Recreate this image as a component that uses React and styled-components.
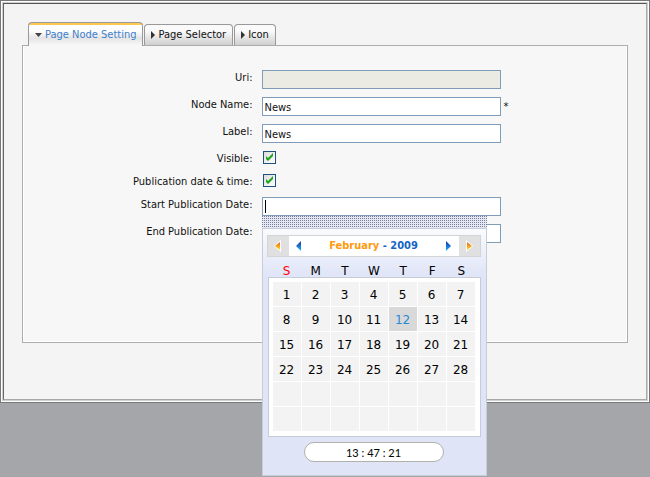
import React, { useState } from "react";
import styled, { createGlobalStyle, css } from "styled-components";

const Global = createGlobalStyle`
  *, *::before, *::after { box-sizing: border-box; }
  body {
    margin: 0;
    background: #a5a6aa;
    color: #111;
    font: 11px/16px "DejaVu Sans Condensed", Tahoma, sans-serif;
  }
  button, input { font: inherit; color: inherit; margin: 0; }
`;

const Page = styled.div`
  min-height: 100vh;
  background: #a5a6aa;
`;

const Frame = styled.main`
  border: 1px solid #77787a;
  background: #fff;
  padding: 1px;
`;

const Bevel = styled.div`
  border: 1px solid #d0d0d0;
`;

const Surface = styled.div`
  border: 1px solid #a8a8a8;
  border-top-color: #555;
  border-left-color: #666;
  background: #f4f4f4;
  padding: 18px 18px 56px;
`;

const TabList = styled.div`
  display: flex;
  align-items: flex-end;
  gap: 1px;
  padding-left: 6px;
`;

const Tab = styled.button`
  display: flex;
  align-items: center;
  gap: 3px;
  height: 21px;
  padding: 0 6px;
  border: 1px solid #999;
  border-bottom: 0;
  border-radius: 4px 4px 0 0;
  background: linear-gradient(#fafafa 30%, #cfcfcf);
  white-space: nowrap;
  ${(p) =>
    p.$active &&
    css`
      position: relative;
      height: 24px;
      margin-bottom: -1px;
      color: #3d80cc;
      background: linear-gradient(#ffc850 2px, #fff 2px, #fff 8px, #e4e4e4 15px, #f7f7f7 22px);
    `}
`;

const Panel = styled.section`
  border: 1px solid #adadad;
  background: #f7f7f7;
  box-shadow: inset -1px -1px #fff, inset 1px 0 #fff;
  padding: 24px 0 99px;
`;

const Form = styled.form`
  display: grid;
  gap: 8px;
`;

const Row = styled.div`
  display: grid;
  grid-template-columns: 38% 1fr;
  column-gap: 9px;
  height: ${(p) => (p.$short ? 15 : 19)}px;
`;

const Label = styled.label`
  text-align: right;
`;

const Control = styled.div`
  position: relative;
  display: flex;
  align-items: flex-start;
  gap: 3px;
`;

const TextBox = styled.input`
  width: 239px;
  height: 19px;
  padding: 1px 2px 0;
  border: 1px solid #7f9db9;
  border-radius: 0;
  background: #fff;
  outline: 0;
  &:disabled { background: #ebebe4; }
  &:focus:placeholder-shown {
    caret-color: transparent;
    background: linear-gradient(#000, #000) 2px 2px / 1px 13px no-repeat #fff;
  }
`;

const Required = styled.span`
  line-height: 20px;
`;

const TickWrap = styled.span`
  display: grid;
  margin-left: 1px;
  > * { grid-area: 1 / 1; }
`;

const TickBox = styled.input`
  appearance: none;
  width: 13px;
  height: 13px;
  border: 1px solid #1c5180;
  background: linear-gradient(135deg, #dcdcd7, #fff);
  & + svg { visibility: hidden; }
  &:checked + svg { visibility: visible; }
`;

const TickMark = styled.svg`
  width: 13px;
  height: 13px;
  pointer-events: none;
  z-index: 1;
`;

const Popup = styled.div`
  position: absolute;
  top: 100%;
  left: 0;
  z-index: 2;
  width: 225px;
  font: 12px/14px "DejaVu Sans", Verdana, sans-serif;
  color: #000;
`;

const Grip = styled.div`
  height: 12px;
  background: conic-gradient(#e4e7f6 75%, #7c7f92 0) 0 0 / 2px 2px;
`;

const CalendarBody = styled.div`
  padding: 6px 5px 13px 4px;
  border: 1px solid #c8ccd6;
  background: linear-gradient(#fafbfe, #dfe4f7 48px);
`;

const CalendarHead = styled.div`
  display: flex;
  height: 22px;
  border: 1px solid #d4d4d4;
  background: #fff;
`;

const Step = styled.button`
  display: grid;
  place-items: center;
  width: ${(p) => (p.$outer ? 21 : 19)}px;
  padding: 0;
  border: 0;
  background: ${(p) => (p.$outer ? "#e1e0e0" : "#fff")};
`;

const Title = styled.div`
  flex: 1;
  text-align: center;
  font: bold 11px/20px "DejaVu Sans Condensed", Tahoma, sans-serif;
  white-space: nowrap;
  color: #1264c4;
`;

const Month = styled.span`
  color: #ff9a0c;
`;

const Days = styled.table`
  display: block;
  margin-left: 1px;
  text-align: center;
`;

const Weekdays = styled.thead`
  display: block;
  height: 20px;
  padding: 7px 5px 0;
`;

const Weeks = styled.tbody`
  display: grid;
  gap: 1px;
  padding: 4px 5px 5px 4px;
  border: 1px solid #c8ccd6;
  background: #fff;
`;

const Week = styled.tr`
  display: grid;
  grid-template-columns: repeat(7, 1fr);
  column-gap: 1px;
`;

const Weekday = styled.th`
  padding: 0;
  font-weight: normal;
  color: ${(p) => (p.$sunday ? "#f00" : "#000")};
`;

const DayCell = styled.td`
  display: grid;
  height: 24px;
  padding: 0;
  background: ${(p) => (p.$today ? "#d9d9d9" : "#f3f3f3")};
  color: ${(p) => (p.$today ? "#2788d8" : "#000")};
`;

const Day = styled.button`
  padding: 2px 0 0;
  border: 0;
  background: none;
`;

const Clock = styled.input`
  display: block;
  width: 140px;
  height: 20px;
  margin: 5px auto 0;
  padding: 0;
  border: 1px solid #b0b0ac;
  border-radius: 10px;
  background: #fff;
  text-align: center;
  font: 11px/18px "Lato", Tahoma, sans-serif;
`;

const tabs = ["Page Node Setting", "Page Selector", "Icon"];

function TabArrow({ open }) {
  return open ? (
    <svg width="7" height="5" viewBox="0 0 7 5" aria-hidden="true">
      <path d="M0 1h7L3.500 5z" fill="#444" />
    </svg>
  ) : (
    <svg width="4" height="8" viewBox="0 0 4 8" aria-hidden="true">
      <path d="M0 0v8l4-4z" fill="#333" />
    </svg>
  );
}

function StepArrow({ back, outer }) {
  const id = `arrow-${outer ? "year" : "month"}-${back ? "back" : "next"}`;
  return (
    <svg width="8" height="12" viewBox="0 0 8 12" aria-hidden="true">
      <defs>
        <linearGradient id={id} x1="0" y1="0" x2="0" y2="1">
          <stop offset="0.2" stopColor={outer ? "#f07818" : "#1648b8"} />
          <stop offset="1" stopColor={outer ? "#ffe020" : "#20b8ff"} />
        </linearGradient>
      </defs>
      {outer && <path d={back ? "M7 0v12L0 6z" : "M1 0v12l7-6z"} fill="#fff" />}
      <path
        d={
          outer
            ? back ? "M6 2v8L1 6z" : "M2 2v8l5-4z"
            : back ? "M7 1v10L2 6z" : "M1 1v10l5-5z"
        }
        fill={`url(#${id})`}
      />
    </svg>
  );
}

function Field({ id, label, children, short }) {
  return (
    <Row $short={short}>
      <Label htmlFor={id}>{label}</Label>
      <Control>{children}</Control>
    </Row>
  );
}

function Tick({ id }) {
  return (
    <TickWrap>
      <TickBox id={id} type="checkbox" defaultChecked />
      <TickMark viewBox="0 0 13 13" aria-hidden="true">
        <path d="M3 5v3l2 2 5-5V2L5 7z" fill="#21a121" />
      </TickMark>
    </TickWrap>
  );
}

function Calendar() {
  return (
    <Popup role="dialog" aria-label="Calendar">
      <Grip />
      <CalendarBody>
        <CalendarHead>
          <Step type="button" $outer aria-label="Previous year"><StepArrow back outer /></Step>
          <Step type="button" aria-label="Previous month"><StepArrow back /></Step>
          <Title><Month>February</Month> - 2009</Title>
          <Step type="button" aria-label="Next month"><StepArrow /></Step>
          <Step type="button" $outer aria-label="Next year"><StepArrow outer /></Step>
        </CalendarHead>
        <Days>
          <Weekdays>
            <Week>
              {["S", "M", "T", "W", "T", "F", "S"].map((name, i) => (
                <Weekday key={i} $sunday={i === 0}>{name}</Weekday>
              ))}
            </Week>
          </Weekdays>
          <Weeks>
            {[0, 1, 2, 3, 4, 5].map((week) => (
              <Week key={week}>
                {[1, 2, 3, 4, 5, 6, 7].map((weekday) => {
                  const date = week * 7 + weekday;
                  return (
                    <DayCell key={date} $today={date === 12}>
                      {date <= 28 && <Day type="button">{date}</Day>}
                    </DayCell>
                  );
                })}
              </Week>
            ))}
          </Weeks>
        </Days>
        <Clock aria-label="Time" defaultValue="13 : 47 : 21" />
      </CalendarBody>
    </Popup>
  );
}

export default function App() {
  const [active, setActive] = useState(0);
  return (
    <Page>
      <Global />
      <Frame>
        <Bevel>
          <Surface>
            <TabList role="tablist">
              {tabs.map((name, i) => (
                <Tab
                  key={name}
                  type="button"
                  role="tab"
                  aria-selected={i === active}
                  $active={i === active}
                  onClick={() => setActive(i)}
                >
                  <TabArrow open={i === active} />
                  {name}
                </Tab>
              ))}
            </TabList>
            <Panel role="tabpanel">
              <Form>
                <Field id="uri" label="Uri:"><TextBox id="uri" disabled /></Field>
                <Field id="node" label="Node Name:">
                  <TextBox id="node" defaultValue="News" required />
                  <Required>*</Required>
                </Field>
                <Field id="label" label="Label:"><TextBox id="label" defaultValue="News" /></Field>
                <Field id="visible" label="Visible:" short><Tick id="visible" /></Field>
                <Field id="timed" label="Publication date & time:" short><Tick id="timed" /></Field>
                <Field id="start" label="Start Publication Date:">
                  <TextBox id="start" placeholder=" " autoFocus />
                  <Calendar />
                </Field>
                <Field id="end" label="End Publication Date:"><TextBox id="end" /></Field>
              </Form>
            </Panel>
          </Surface>
        </Bevel>
      </Frame>
    </Page>
  );
}
